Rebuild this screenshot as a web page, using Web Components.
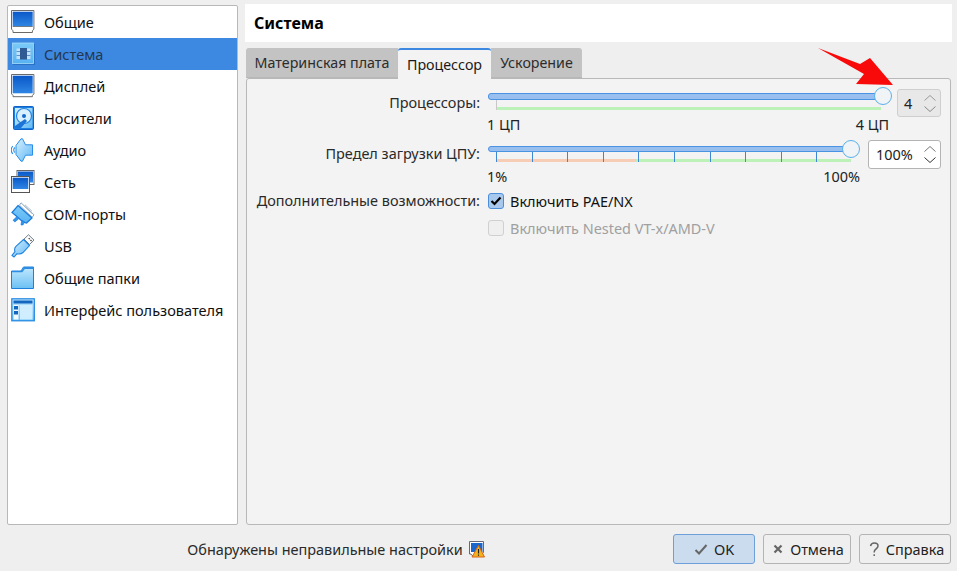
<!DOCTYPE html>
<html lang="ru"><head><meta charset="utf-8"><title>Система</title>
<style>
html,body{margin:0;padding:0;background:#efefef}
body{font:14.45px "Noto Sans","Open Sans",sans-serif;color:#1a1a1a}
</style></head><body>
<vb-dialog>
  <vb-sidebar slot="side">
    <vb-nav icon="general">Общие</vb-nav>
    <vb-nav icon="system" selected>Система</vb-nav>
    <vb-nav icon="display">Дисплей</vb-nav>
    <vb-nav icon="storage">Носители</vb-nav>
    <vb-nav icon="audio">Аудио</vb-nav>
    <vb-nav icon="network">Сеть</vb-nav>
    <vb-nav icon="serial">COM-порты</vb-nav>
    <vb-nav icon="usb">USB</vb-nav>
    <vb-nav icon="folder">Общие папки</vb-nav>
    <vb-nav icon="ui">Интерфейс пользователя</vb-nav>
  </vb-sidebar>
  <vb-header slot="head">Система</vb-header>
  <vb-tabs slot="tabs">
    <vb-tab style="width:152px">Материнская плата</vb-tab>
    <vb-tab active style="width:93px">Процессор</vb-tab>
    <vb-tab style="width:91px">Ускорение</vb-tab>
  </vb-tabs>
  <vb-pane slot="pane">
    <vb-label>Процессоры:</vb-label>
    <vb-field>
      <vb-slider mode="cpu" min="1 ЦП" max="4 ЦП"></vb-slider>
      <vb-spin disabled value="4" style="width:44px"></vb-spin>
    </vb-field>
    <vb-label>Предел загрузки ЦПУ:</vb-label>
    <vb-field>
      <vb-slider mode="cap" min="1%" max="100%"></vb-slider>
      <vb-spin value="100%" style="width:73px"></vb-spin>
    </vb-field>
    <vb-label check>Дополнительные возможности:</vb-label>
    <vb-check checked>Включить PAE/NX</vb-check>
    <span></span>
    <vb-check disabled>Включить Nested VT-x/AMD-V</vb-check>
  </vb-pane>
  <vb-status slot="status">Обнаружены неправильные настройки</vb-status>
  <vb-btn slot="btns" kind="ok" default style="width:82px">OK</vb-btn>
  <vb-btn slot="btns" kind="cancel" style="width:88px">Отмена</vb-btn>
  <vb-btn slot="btns" kind="help" style="width:92px">Справка</vb-btn>
</vb-dialog>
<script>
const defs=`<defs>
<linearGradient id="scr" x1="0" y1="0" x2="0" y2="1"><stop offset="0" stop-color="#0a58c8"/><stop offset="1" stop-color="#2f86e4"/></linearGradient>
<linearGradient id="lb" x1="0" y1="0" x2="1" y2="1"><stop offset="0" stop-color="#d6efff"/><stop offset="1" stop-color="#5fb8f4"/></linearGradient>
<linearGradient id="sq" x1="0" y1="0" x2="0" y2="1"><stop offset="0" stop-color="#7ccbf8"/><stop offset="1" stop-color="#58b2f2"/></linearGradient>
<linearGradient id="fold" x1="0" y1="0" x2="0" y2="1"><stop offset="0" stop-color="#c2e8fd"/><stop offset="1" stop-color="#6cc0f5"/></linearGradient>
</defs>`;
const ICONS={
general:`<path d="M.5.5h22.400v18.600l-1.500 1.700v1.700H2v-1.700L.5 19.100z" fill="#fff" stroke="#6a6a6a"/><rect x="1.700" y="1.700" width="20" height="14.600" fill="url(#scr)"/><path d="M1.700 16.500h20" stroke="#3a3a3a" stroke-width=".6"/>`,
display:`<path d="M.5.5h22.400v19.400l-1.500 1.500v1.300H2v-1.300L.5 19.900z" fill="#fff" stroke="#6a6a6a"/><rect x="1.700" y="1.700" width="20" height="17.600" fill="url(#scr)"/>`,
system:`<rect x="2" y="2" width="22" height="21" fill="#1f66b8" opacity=".7"/><rect x="1.500" y="1" width="21" height="20.500" fill="url(#sq)" stroke="#a6dcfb" stroke-width=".8"/><rect x="5.500" y="6.500" width="14" height="10.500" fill="#bfe2fa"/><rect x="9" y="6" width="7" height="11.500" fill="#2f5a93"/><path d="M5.500 9.500h3.500M5.500 13.500h3.500M16 9.500h3.500M16 13.500h3.500" stroke="#5f93c8" stroke-width="1"/>`,
storage:`<rect x="2.500" y=".5" width="20" height="23" rx="1" fill="#1c7ee2" stroke="#0e63c4"/><rect x="4" y="2" width="17.500" height="20" fill="url(#lb)"/><circle cx="13" cy="10" r="7.500" fill="#d8f0ff" stroke="#2585de" stroke-width="1.200"/><circle cx="13" cy="10" r="2" fill="#1268c9"/><path d="M4 20l10-7 2 2-6 7H4z" fill="#1b74d6"/>`,
audio:`<path d="M5 7.500L10 .8h1.500l3 6h7v10.400h-7l-3 6H10L5 16.500z" fill="url(#lb)" stroke="#2a8ee6"/><path d="M1.800 8a6.500 6.500 0 0 0 0 8M3.800 9.500a3.500 3.500 0 0 0 0 5" fill="none" stroke="#2a8ee6" stroke-width="1.100"/>`,
network:`<rect x="6" y=".5" width="17" height="14" fill="#fff" stroke="#666"/><rect x="7" y="1.500" width="15" height="11" fill="url(#scr)"/><rect x=".5" y="6.500" width="18" height="16" fill="#fff" stroke="#555"/><rect x="1.700" y="7.700" width="15.600" height="11.300" fill="url(#scr)"/>`,
serial:`<path d="M10 .8l13 12-1.800 2.500L8.500 3.200z" fill="#fff" stroke="#8fa8bf"/><path d="M12 3l9 8.500M14 2.800l7 6.500" stroke="#aabccd"/><path d="M7 3.500L21 16l-5.500 5-3.500-1L3.500 12.500 1 10.500z" fill="url(#sq)" stroke="#1878da" stroke-width="1.200"/><path d="M5.500 15l-3.500 3.200 1.800 1.800 3.700-3zM13.500 20l-1.500 3h-2l.5-3.500 1.500-1z" fill="#2d94ea" stroke="#1576d6" stroke-width=".6"/>`,
usb:`<path d="M17.500.8l5.500 5.300-4.500 4.400-5.500-5.400z" fill="#fff" stroke="#6a7a88"/><path d="M17.700 4.200l1 1M19.500 6l1 1" stroke="#333" stroke-width="1.100"/><path d="M12.500 5.500l6 6-6.500 7c-2 1.700-4 1.700-6 1.200L3 23l-2-1.500 3-3.800c-.8-2-.3-4 1.200-5.500z" fill="url(#lb)" stroke="#1e83e0" stroke-width="1.100"/>`,
folder:`<path d="M.5 22.500V5h9.500l2.500-4h10v21.500z" fill="url(#fold)" stroke="#1f80dc"/><path d="M1 5h9.500l2.500-4h9.500v2H13.800l-2.500 3.300H1z" fill="#2c8de3"/>`,
ui:`<rect x=".8" y=".8" width="22.500" height="22" fill="url(#fold)" stroke="#1f86e0" stroke-width="1.200"/><rect x="2.500" y="2.500" width="19" height="3" fill="#1467bf"/><rect x="2.500" y="7" width="5" height="14.500" fill="#f4fbff"/><rect x="3" y="8" width="4" height="3.500" fill="#1467bf"/><rect x="3" y="13" width="4" height="3.500" fill="#1467bf"/><rect x="9" y="7" width="12.500" height="14.500" fill="#cfeeff"/>`
};
function def(name,css,html){
  const cls=class extends HTMLElement{
    constructor(){super();this.attachShadow({mode:'open'})}
    connectedCallback(){this.shadowRoot.innerHTML=`<style>${css}</style>`+(typeof html==='function'?html(this):html)}
  };
  customElements.define(name,cls);
}
def('vb-dialog',`
:host{display:grid;position:relative;width:957px;height:571px;box-sizing:border-box;padding:4px 5px 0 7px;grid-template-columns:231px 707px;column-gap:7px;grid-template-rows:38px 30px 453px 39px;overflow:hidden}
.side{grid-column:1;grid-row:1/4;display:flex;margin-top:1px}
.head{grid-column:2;grid-row:1}
.tabs{grid-column:2;grid-row:2;margin:6px 0 -7px;display:block;padding-left:1px;position:relative;z-index:1}
.pane{grid-column:2;grid-row:3;margin:6px 1px 0;display:flex}
.foot{grid-column:1/3;grid-row:4;margin-top:9px;height:30px;display:flex;align-items:center;padding-right:1px}
.status{flex:1;display:flex;justify-content:center}
.btns{display:flex;gap:8px;margin-left:8px}
svg.arrow{position:absolute;left:0;top:0;width:957px;height:571px;pointer-events:none;z-index:3}
`,`<div class="side"><slot name="side"></slot></div><div class="head"><slot name="head"></slot></div>
<div class="tabs"><slot name="tabs"></slot></div><div class="pane"><slot name="pane"></slot></div>
<div class="foot"><div class="status"><slot name="status"></slot></div><div class="btns"><slot name="btns"></slot></div></div>
<svg class="arrow" viewBox="0 0 957 571"><polygon points="818,48 860,64 870,58 893,85 856,84 864,74" fill="#f80a0a"/></svg>`);
def('vb-sidebar',`:host{display:block;width:231px;box-sizing:border-box;background:#fff;border:1px solid #b8b8b8;border-radius:2px;font-size:14.55px}`,`<slot></slot>`);
def('vb-nav',`
:host{display:flex;align-items:center;height:32px;color:#111}
:host([selected]){background:#3d89e2;color:#25374f}
svg{width:24px;height:24px;margin:0 9px 0 3px;flex:none;display:block}
`,el=>`<svg viewBox="0 0 24 24">${defs}${ICONS[el.getAttribute('icon')]}</svg><slot></slot>`);
def('vb-header',`:host{display:flex;align-items:center;height:38px;background:#fff;padding-left:9px;font-weight:700;font-size:16px;color:#000;box-sizing:border-box}`,`<slot></slot>`);
def('vb-tabs',`:host{display:flex;height:31px;font-size:14.25px}`,`<slot></slot>`);
def('vb-tab',`
:host{display:flex;align-items:center;justify-content:center;box-sizing:border-box;height:30px;background:#c3c3c3;color:#2c2c2c;border-bottom:1px solid #b8b8b8}
:host(:first-child){border-top-left-radius:3px}
:host(:last-child){border-top-right-radius:3px}
:host([active]){background:#f3f3f3;border-top:2px solid #3d89e2;border-bottom:0;height:31px;padding-bottom:1px;border-radius:3px 3px 0 0;color:#1a1a1a}
`,`<slot></slot>`);
def('vb-pane',`
:host{display:grid;flex:1;align-content:start;box-sizing:border-box;background:#f3f3f3;border:1px solid #b8b8b8;border-radius:3px;padding:10px 9px 0 8px;grid-template-columns:225px 1fr;column-gap:7px;row-gap:3px}
`,`<slot></slot>`);
def('vb-label',`
:host{display:block;text-align:right;line-height:28px;color:#2a2a2a;white-space:nowrap}
:host([check]){line-height:24px}
`,`<slot></slot>`);
def('vb-field',`:host{display:flex;gap:8px;align-items:flex-start}`,`<slot></slot>`);
def('vb-slider',`
:host{display:block;flex:1;position:relative;color:#222}
:host([mode=cpu]){padding-bottom:3px}
.rail{height:7px;border:1px solid #4a92e4;box-sizing:border-box;background:#98bfee;border-radius:3px 0 0 3px;margin-left:1px}
.cpu .rail{margin-top:4px;margin-right:6px}
.cap .rail{margin-top:6px;margin-right:9px;height:6px}
.knob{position:absolute;width:18px;height:18px;box-sizing:border-box;border-radius:50%;background:#f1f4f7;border:1.500px solid #59b0ea}
.cpu .knob{right:-3px;top:-2px}
.cap .knob{right:0;top:0}
.ruler{position:relative;height:10px}
.cpu .ruler{margin:0 8px 0 9px;height:10px;border-left:1px solid #c8c8c8}
.line{position:absolute;left:0;right:0;bottom:0;height:3px;background:#bcf2b7}
.cap .ruler{margin:0 9px 0 9px}
.cap .line{background:linear-gradient(90deg,#f8cdb6 0,#f8cdb6 39.4%,#bcf2b7 39.4%)}
.ticks{position:absolute;inset:0;background:repeating-linear-gradient(90deg,#3f86d4 0,#3f86d4 1px,transparent 1px,transparent 35.6px)}
.labels{display:flex;justify-content:space-between;line-height:18px;margin-top:6px}
`,el=>{const m=el.getAttribute('mode');return `<div class="${m}"><div class="rail"></div><div class="knob"></div><div class="ruler"><div class="line"></div>${m==='cap'?'<div class="ticks"></div>':''}</div><div class="labels"><span>${el.getAttribute('min')}</span><span>${el.getAttribute('max')}</span></div></div>`});
def('vb-spin',`
:host{display:flex;align-items:center;box-sizing:border-box;height:29px;flex:none;border:1px solid #b4b4b4;border-radius:3px;background:#fff;padding-left:7px;color:#222}
:host([disabled]){background:#e8e8e8;border-color:#cfcfcf;height:28px;padding-left:6px}
span{flex:1}
svg{width:14px;height:21px;margin-right:3px;display:block}
`,el=>{const d=el.hasAttribute('disabled');const c=d?'#8a8a8a':'#333';return `<span>${el.getAttribute('value')}</span><svg viewBox="0 0 14 21"><path d="M1.500 7.500L7 2.500l5.500 5" fill="none" stroke="${d?'#9a9a9a':'#777'}"/><path d="M1.500 13.500L7 18.500l5.500-5" fill="none" stroke="${c}"/></svg>`});
def('vb-check',`
:host{display:flex;align-items:center;height:24px;color:#111}
:host([disabled]){color:#a0a0a0}
i{display:block;width:16px;height:16px;box-sizing:border-box;margin:0 6px 0 1px;border-radius:3px;border:1px solid #d0d0d0;background:#efefef}
:host([checked]) i{border-color:#4b8fdc;background:#a9c8ee}
svg{display:block;width:14px;height:14px}
`,el=>`<i>${el.hasAttribute('checked')?'<svg viewBox="0 0 14 14"><path d="M2.500 7l3 3 6-6.500" fill="none" stroke="#000" stroke-width="2.200"/></svg>':''}</i><slot></slot>`);
def('vb-status',`
:host{display:flex;align-items:center;gap:6px;color:#2a2a2a}
svg{width:16px;height:17px;display:block}
`,`<slot></slot><svg viewBox="0 0 16 17"><path d="M.5.5h14v11l-3 3H3l-1-1.500H.5z" fill="#fff" stroke="#667"/><rect x="2" y="2" width="11.500" height="9" fill="#1a66cc"/><path d="M9.500 4.500l6 11.500H3z" fill="#f5b21c" stroke="#d8641a"/><path d="M9.500 8v4.500M9.500 13.500v1.200" stroke="#222" stroke-width="1.200"/></svg>`);
def('vb-btn',`
:host{display:flex;align-items:center;justify-content:center;gap:6px;box-sizing:border-box;height:30px;border:1px solid #b4b4b4;border-radius:3px;background:#efefef;color:#222}
:host([default]){background:#cbdcef;border-color:#6e9fd8}
svg{width:14px;height:14px;display:block}
`,el=>{const k=el.getAttribute('kind');
 const ic={ok:'<path d="M1.500 8l3.500 3.500L12.500 3" fill="none" stroke="#666" stroke-width="2"/>',cancel:'<path d="M4.500 3.500l7 7M11.500 3.500l-7 7" stroke="#666" stroke-width="2.200"/>',help:'<path d="M4.500 4c.5-2 2-3 3.800-3 2.200 0 3.700 1.300 3.700 3 0 2.800-3.800 3-3.800 6v.5M8.200 12.300v1.700" fill="none" stroke="#666" stroke-width="1.500"/>'}[k];
 return `<svg viewBox="0 0 14 14">${ic}</svg><slot></slot>`});
</script>
</body></html>
